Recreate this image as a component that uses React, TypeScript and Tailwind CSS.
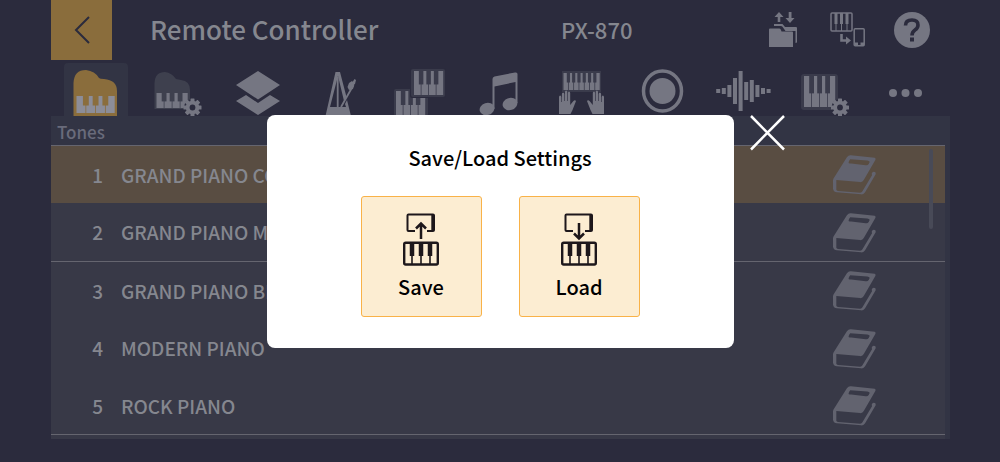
import React, { useState } from 'react';

const tones = [
  { id: 1, name: 'GRAND PIANO CONCERT' },
  { id: 2, name: 'GRAND PIANO MELLOW' },
  { id: 3, name: 'GRAND PIANO BRIGHT' },
  { id: 4, name: 'MODERN PIANO' },
  { id: 5, name: 'ROCK PIANO' },
];

// rows that start a new group get a divider above them
const groupStarts = [1, 3];

type KeysProps = { x: number; y: number; w: number; h: number; n: number; white: string; black: string };

function Keys({ x, y, w, h, n, white, black }: KeysProps) {
  const step = w / n;
  return (
    <g>
      {Array.from({ length: n }, (_, i) => (
        <rect key={i} x={x + i * step} y={y} width={step - 0.8} height={h} fill={white} />
      ))}
      {Array.from({ length: n - 1 }, (_, i) => (
        <rect key={i} x={x + (i + 1) * step - step * 0.3 - 0.4} y={y} width={step * 0.6} height={h * 0.56} fill={black} />
      ))}
    </g>
  );
}

function Gear({ x, y }: { x: number; y: number }) {
  return (
    <g transform={`translate(${x} ${y})`}>
      <circle r="8.6" fill="#2b2b3d" />
      {[0, 45, 90, 135].map((a) => (
        <rect key={a} x="-2" y="-9" width="4" height="18" rx="0.5" fill="#757682" transform={`rotate(${a})`} />
      ))}
      <circle r="6.8" fill="#757682" />
      <circle r="2.9" fill="#2b2b3d" />
    </g>
  );
}

const hand = 'M0.500 24V7Q0.600 5.500 1.600 5.500Q2.700 5.500 2.800 7V12H3.400V4Q3.500 2.500 4.600 2.500Q5.700 2.500 5.800 4V11H6.400V2Q6.500 0.500 7.600 0.500Q8.700 0.500 8.800 2V11H9.400V3Q9.500 1.500 10.500 1.500Q11.600 1.500 11.700 3V15L14.500 11.500Q16.500 9.500 17.500 11L14 20L12 24Z';

const bars = [4, 6, 12, 26, 40, 18, 22, 12, 6, 4];

const tabs = [
  {
    label: 'Tones',
    icon: (
      <>
        <path d="M9.500 53V20Q10 7 22 7Q31 8 35 15Q36 16 40 16Q53 17 53 28V53Z" fill="#8a6d3c" />
        <Keys x={12.5} y={33} w={39} h={17} n={4} white="#8c8d98" black="#8a6d3c" />
      </>
    ),
  },
  {
    label: 'Tone settings',
    icon: (
      <>
        <path d="M9.500 46V20Q10 9 20 9Q27 10 31 16L36 17Q45 18 45 27V46Z" fill="#3e404e" />
        <Keys x={11.5} y={30} w={32} h={15} n={4} white="#757682" black="#3e404e" />
        <Gear x={47.5} y={44.5} />
      </>
    ),
  },
  {
    label: 'Layer',
    icon: <path d="M32 8L54 22L32 36.500L10 22ZM20 32L32 40L44 32L54 38L32 52L10 38Z" />,
  },
  {
    label: 'Metronome',
    icon: (
      <>
        <path d="M28.500 9H33L39.500 34L37 38L31 13L23 44H39L38 41L40 37L44 53H18.500Z" />
        <path d="M30.700 14V45M34 44L46.500 22" stroke="#757682" strokeWidth="1.800" fill="none" />
        <path d="M42 20L45 18L47.500 21L46 26L42 27L40.500 24ZM45 20L47.500 16L49 17L48 21Z" />
      </>
    ),
  },
  {
    label: 'Split',
    icon: (
      <>
        <rect x="6" y="26" width="34" height="27" rx="2" fill="#3a3b4b" />
        <Keys x={8} y={28} w={30} h={25} n={4} white="#757682" black="#3a3b4b" />
        <rect x="22" y="5" width="36" height="30" rx="2" fill="#2b2b3d" />
        <rect x="23" y="6" width="34" height="28" rx="2" fill="#3a3b4b" />
        <Keys x={26} y={8} w={30} h={24} n={4} white="#757682" black="#3a3b4b" />
      </>
    ),
  },
  {
    label: 'Songs',
    icon: (
      <>
        <path d="M23.500 16Q23.500 14 25.500 13.500L46 9.500Q48.500 9 48.500 11V40H46.500V19L25.500 23.500V46H23.500Z" />
        <ellipse cx="18" cy="46" rx="7.500" ry="6" transform="rotate(-18 18 46)" />
        <ellipse cx="41" cy="41" rx="7.500" ry="6" transform="rotate(-18 41 41)" />
      </>
    ),
  },
  {
    label: 'Duet',
    icon: (
      <>
        <rect x="12" y="8" width="39" height="21" fill="#3a3b4b" />
        <Keys x={13.5} y={10} w={37} h={17} n={7} white="#757682" black="#3a3b4b" />
        <path d={hand} transform="translate(8.5 27)" />
        <path d={hand} transform="translate(54.500 27) scale(-1 1)" />
      </>
    ),
  },
  {
    label: 'Recorder',
    icon: (
      <>
        <ellipse cx="31.500" cy="28" rx="19" ry="20" fill="none" stroke="#757682" strokeWidth="3.500" />
        <circle cx="31.500" cy="28" r="13" />
      </>
    ),
  },
  {
    label: 'Audio',
    icon: (
      <>
        {bars.map((h, i) => (
          <rect key={i} x={4.2 + i * 5.6} y={28 - h / 2} width="4" height={h} />
        ))}
      </>
    ),
  },
  {
    label: 'Keyboard settings',
    icon: (
      <>
        <rect x="8" y="11" width="37" height="36" rx="3" fill="#3a3b4b" />
        <Keys x={11} y={13} w={32} h={31} n={4} white="#757682" black="#3a3b4b" />
        <Gear x={47} y={44.5} />
      </>
    ),
  },
  {
    label: 'More',
    icon: (
      <>
        <circle cx="19" cy="30" r="4" />
        <circle cx="31.500" cy="30" r="4" />
        <circle cx="44" cy="30" r="4" />
      </>
    ),
  },
];

function BookIcon() {
  return (
    <svg viewBox="96 40 136 124" className="h-[41px] w-[45px]" fill="none">
      <path
        fillRule="evenodd"
        fill="currentColor"
        d="M153 44L225 51Q230 53 227 58L192 119Q188 126 181 125L109 119V148Q110 151 114 152L181 157Q186 157 188 153L217 104Q214 97 222 94Q229 94 228 101L196 156Q192 163 184 162L111 156Q100 154 99 145V120Q99 116 102 112L141 50Q146 43 153 44ZM151 56Q145 63 146 67Q148 69 154 69L198 74Q204 75 207 70Q211 64 209 62L203 60Z"
      />
    </svg>
  );
}

// keyboard with a device above it, arrow goes up on save and down on load
function TransferIcon({ down }: { down?: boolean }) {
  return (
    <svg viewBox="0 0 36 54" className="h-[54px] w-9" fill="none" stroke="#1d171b">
      <path d="M12 18H5.500Q4.500 18 4.500 17V2.500Q4.500 1.500 5.500 1.500H30Q31 1.500 31 2.500V17Q31 18 30 18H24" strokeWidth="2" />
      <path d="M29.800 2V17.500" strokeWidth="3" />
      {down ? (
        <path d="M18 10V25M13 20.500L18 25.500L23 20.500" strokeWidth="2.500" />
      ) : (
        <path d="M18 26V11M13 15.500L18 10.500L23 15.500" strokeWidth="2.500" />
      )}
      <rect x="1.200" y="29.700" width="33.600" height="21.800" rx="1.500" strokeWidth="2.400" />
      <path d="M9 42V52M18 42V52M27 42V52" strokeWidth="1.600" />
      <path d="M9 30V43M18 30V43M27 30V43" strokeWidth="4.500" />
    </svg>
  );
}

function Header() {
  return (
    <header className="flex h-[60px] items-center">
      <button aria-label="Back" className="flex h-full w-[61px] items-center justify-center bg-[#8a6d3c]">
        <svg viewBox="0 0 16 28" className="h-7 w-4" fill="none" stroke="#2b2b3d" strokeWidth="2">
          <path d="M15 1L2 14L15 27" />
        </svg>
      </button>
      <h1 className="ml-[38px] w-[411px] pb-0.5 text-[26px] leading-8">Remote Controller</h1>
      <span className="pb-0.5 text-[22px] leading-8">PX-870</span>
      <div className="ml-auto flex items-center gap-7 pr-5 text-[#757682]">
        <button aria-label="Save or load settings">
          <svg viewBox="0 0 36 36" className="size-9" fill="currentColor">
            <path d="M14 0L18.500 5H15.300V10H12.700V5H9.500ZM23.700 0H26.500V6H29.500L25 11L20.500 6H23.700Z" />
            <path d="M9 14V12H17.500L20 15H31Q32 15 32 16V30Q32 31 30.500 31V19H20.500L18 15.500Q17.500 14 16 14ZM5 16.500H14.500Q15.500 16.500 16 18L16.500 19.500H27Q28 19.500 28 20.500V35H4V17.500Q4 16.500 5 16.500Z" />
          </svg>
        </button>
        <button aria-label="Connected instrument">
          <svg viewBox="0 0 36 36" className="size-9" fill="none" stroke="currentColor">
            <rect x="2" y="1" width="21" height="18" rx="1" strokeWidth="1.500" />
            <path d="M7 12V19M12.500 12V19M18 12V19" strokeWidth="1" />
            <path d="M7 1V12M12.500 1V12M18 1V12" strokeWidth="3" />
            <path d="M12.500 22V28.500H18" strokeWidth="2.600" />
            <path d="M17 24.500L22 28.500L17 32.500Z" fill="currentColor" stroke="none" />
            <rect x="25.200" y="16.800" width="10" height="17" rx="1" strokeWidth="1.500" />
            <path d="M25.500 32H29M31.500 32H35" strokeWidth="3" />
          </svg>
        </button>
        <button aria-label="Help" className="ml-px">
          <svg viewBox="0 0 36 36" className="size-9">
            <circle cx="18" cy="18" r="18" fill="currentColor" />
            <path d="M11.500 13.500Q11.500 8 18 8Q24 8 24 13Q24 16 21 18Q18 20 18 23.500" fill="none" stroke="#2b2b3d" strokeWidth="3.600" />
            <rect x="16" y="25.500" width="4" height="4" fill="#2b2b3d" />
          </svg>
        </button>
      </div>
    </header>
  );
}

function SaveLoadDialog({ onClose }: { onClose: () => void }) {
  return (
    <div className="absolute inset-0 flex items-center justify-center">
      <div role="dialog" aria-labelledby="dialog-title" className="relative rounded-lg bg-white px-[94px] pt-7 pb-[31px] text-black">
        <h2 id="dialog-title" className="mb-6 text-center text-[20px] leading-[29px]">Save/Load Settings</h2>
        <div className="flex gap-[37px]">
          <button className="flex size-[121px] flex-col items-center rounded-[3px] border border-[#f9b248] bg-[#fcedd2] pt-4">
            <TransferIcon />
            <span className="mt-1 text-[20px] leading-8">Save</span>
          </button>
          <button className="flex size-[121px] flex-col items-center rounded-[3px] border border-[#f9b248] bg-[#fcedd2] pt-4">
            <TransferIcon down />
            <span className="mt-1 text-[20px] leading-8">Load</span>
          </button>
        </div>
        <button aria-label="Close" onClick={onClose} className="absolute top-0 left-full ml-4">
          <svg viewBox="0 0 36 36" className="size-9" fill="none" stroke="#fff" strokeWidth="2.500">
            <path d="M1 1L34 34.500M34 1L1 34.500" />
          </svg>
        </button>
      </div>
    </div>
  );
}

export default function App() {
  const [dialogOpen, setDialogOpen] = useState(true);
  const [selected, setSelected] = useState(1);

  return (
    <div className="relative min-h-screen overflow-hidden bg-[#2b2b3d] pr-[50px] pl-[51px] font-['Noto_Sans_CJK_JP','Noto_Sans',sans-serif] font-medium text-[#85878f]">
      <Header />

      {/* Tabs */}
      <nav className="grid grid-cols-11 pt-[3px] pr-1 pl-[5px]">
        {tabs.map((tab, i) => (
          <button
            key={tab.label}
            aria-label={tab.label}
            className={`flex justify-self-center rounded-t-sm ${i === 0 ? 'bg-[#323444]' : ''}`}
          >
            <svg viewBox="0 0 64 53" className="h-[53px] w-16" fill="#757682">
              {tab.icon}
            </svg>
          </button>
        ))}
      </nav>

      {/* Tone list */}
      <main className="relative bg-[#323444] pr-[5px]">
        <h2 className="h-[29px] pl-1.5 text-[17px] leading-[31px] text-[#696b7b]">Tones</h2>
        <ul className="border-b-4 border-[#383947]">
          {tones.map((tone) => (
            <li
              key={tone.id}
              className={`flex h-[58px] items-center ${tone.id === selected ? 'bg-[#594d42]' : 'bg-[#383947]'} ${groupStarts.includes(tone.id) ? 'border-t border-t-[#65656f]' : ''} ${tone.id === tones.length ? 'border-b border-b-[#65656f]' : ''}`}
            >
              <button onClick={() => setSelected(tone.id)} className="flex h-full flex-1 items-center text-[19px] leading-7">
                <span className="w-[52px] text-right">{tone.id}</span>
                <span className="ml-[18px]">{tone.name}</span>
              </button>
              <button aria-label={`About ${tone.name}`} className="mr-[68px] text-[#62636f]">
                <BookIcon />
              </button>
            </li>
          ))}
        </ul>
        <div className="absolute top-[33px] right-[17px] h-20 w-1 rounded-sm bg-[#484a57]" />
      </main>

      {dialogOpen && <SaveLoadDialog onClose={() => setDialogOpen(false)} />}
    </div>
  );
}
